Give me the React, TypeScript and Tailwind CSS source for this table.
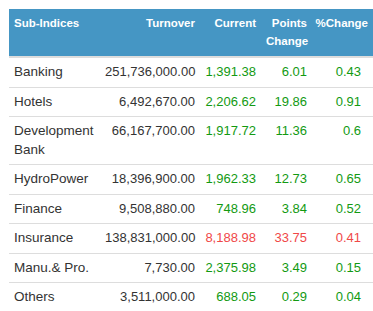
const rows: [string, string, string, string, string, boolean][] = [
  ['Banking', '251,736,000.00', '1,391.38', '6.01', '0.43', true],
  ['Hotels', '6,492,670.00', '2,206.62', '19.86', '0.91', true],
  ['Development Bank', '66,167,700.00', '1,917.72', '11.36', '0.6', true],
  ['HydroPower', '18,396,900.00', '1,962.33', '12.73', '0.65', true],
  ['Finance', '9,508,880.00', '748.96', '3.84', '0.52', true],
  ['Insurance', '138,831,000.00', '8,188.98', '33.75', '0.41', false],
  ['Manu.& Pro.', '7,730.00', '2,375.98', '3.49', '0.15', true],
  ['Others', '3,511,000.00', '688.05', '0.29', '0.04', true],
];

export default function App() {
  return (
    <div className="bg-white w-[373px] h-[311px] overflow-hidden pt-[9px] pl-[9px] font-['Liberation_Sans',Arial,sans-serif]">
      <table className="w-[364px] table-fixed border-collapse">
        <colgroup>
          <col className="w-[91px]" />
          <col className="w-[100px]" />
          <col className="w-[61px]" />
          <col className="w-[51px]" />
          <col className="w-[61px]" />
        </colgroup>
        <thead>
          <tr className="bg-[#4596c4] text-white text-[11.5px] font-bold leading-[18px] align-top border-b-2 border-[#dddddd]">
            <th className="text-left px-[5px] pt-[5px] pb-[6px]">Sub-Indices</th>
            <th className="text-right px-[5px] pt-[5px] pb-[6px]">Turnover</th>
            <th className="text-right px-[5px] pt-[5px] pb-[6px]">Current</th>
            <th className="text-right px-[5px] pt-[5px] pb-[6px]">Points Change</th>
            <th className="text-right pl-0 pr-[5px] pt-[5px] pb-[6px]">%Change</th>
          </tr>
        </thead>
        <tbody className="text-[13px] leading-[18.5px] text-[#333333]">
          {rows.map(([name, turnover, current, points, pct, up], i) => {
            const color = up ? 'text-[#129a12]' : 'text-[#f04848]';
            return (
              <tr key={name} className={i > 0 ? 'border-t border-[#dddddd] align-top' : 'align-top'}>
                <td className="text-left px-[5px] py-[5px] text-[13.5px]">{name}</td>
                <td className="text-right px-[5px] py-[5px]">{turnover}</td>
                <td className={`text-right px-[5px] py-[5px] ${color}`}>{current}</td>
                <td className={`text-right px-[5px] py-[5px] ${color}`}>{points}</td>
                <td className={`text-right pl-[5px] pr-[12px] py-[5px] ${color}`}>{pct}</td>
              </tr>
            );
          })}
        </tbody>
      </table>
    </div>
  );
}
